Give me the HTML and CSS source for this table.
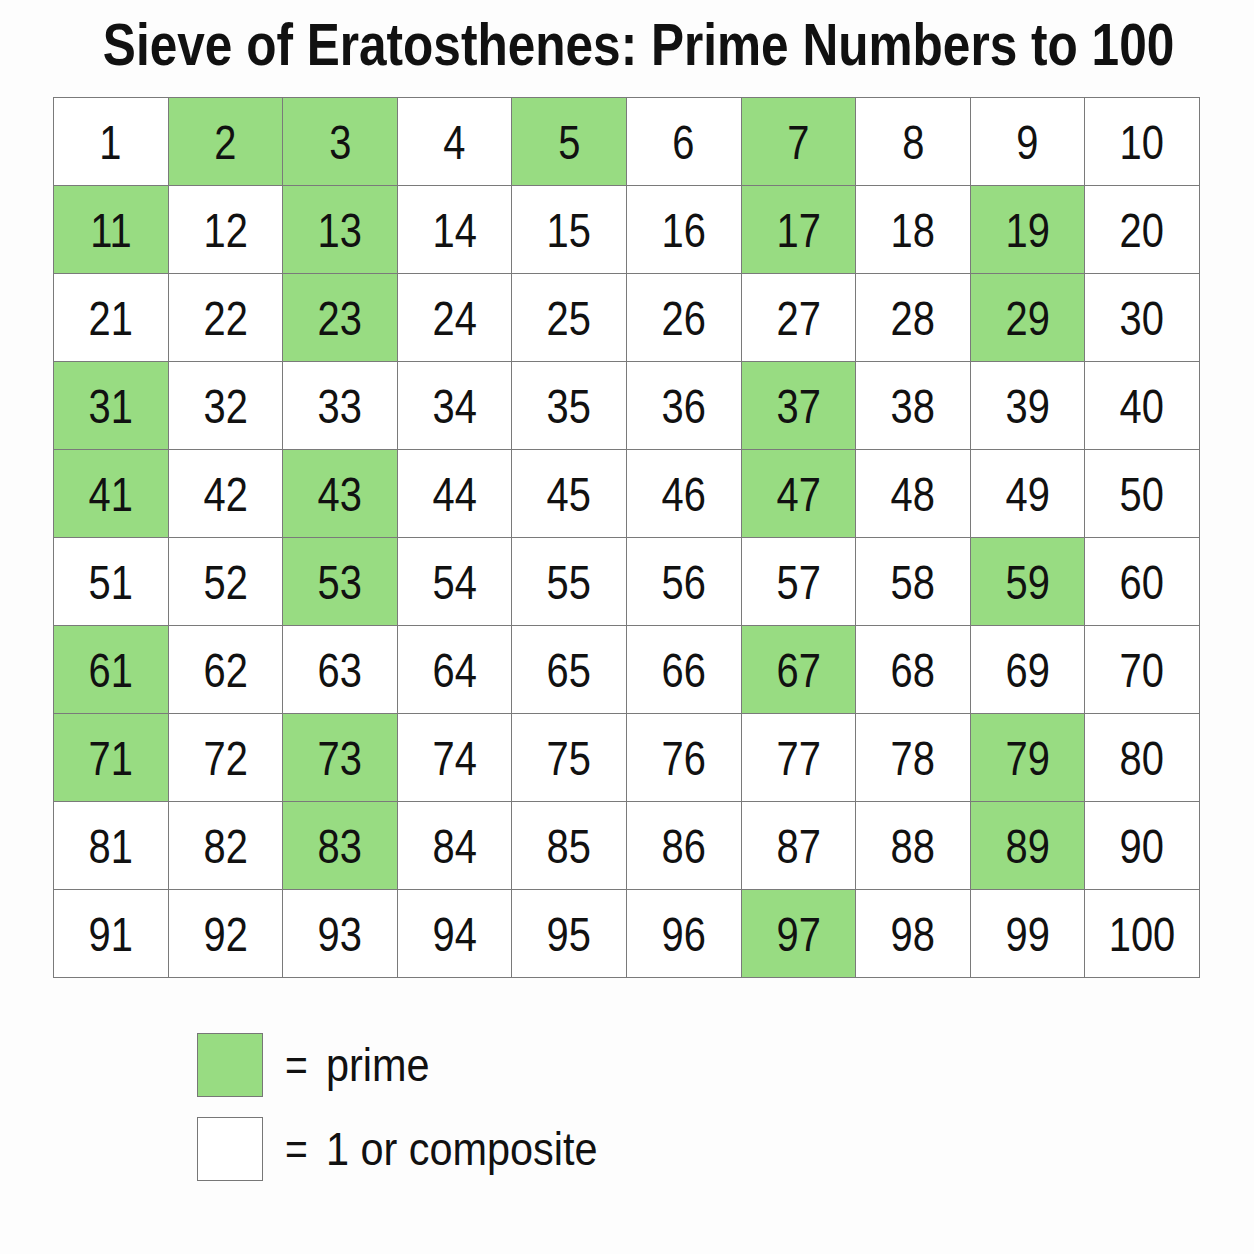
FILE: index.html
```html
<!DOCTYPE html>
<html>
<head>
<meta charset="utf-8">
<link rel="stylesheet" href="styles.css">
</head>
<body>
<div class="page">
  <h1 class="title"><span class="narrow">Sieve of Eratosthenes: Prime Numbers to 100</span></h1>
  <div class="grid" id="grid"></div>
  <div class="legend">
    <div class="legend-row"><span class="swatch prime"></span><span class="legend-text"><span class="narrow eq">=</span><span class="narrow">prime</span></span></div>
    <div class="legend-row"><span class="swatch"></span><span class="legend-text"><span class="narrow eq">=</span><span class="narrow">1 or composite</span></span></div>
  </div>
</div>
<script src="script.js"></script>
</body>
</html>
```
FILE: script.js
```js
(function () {
  var grid = document.getElementById('grid');
  function isPrime(n) {
    if (n < 2) return false;
    for (var i = 2; i * i <= n; i++) if (n % i === 0) return false;
    return true;
  }
  for (var n = 1; n <= 100; n++) {
    var c = document.createElement('div');
    c.className = 'cell' + (isPrime(n) ? ' prime' : '');
    var s = document.createElement('span');
    s.className = 'narrow';
    s.textContent = n;
    c.appendChild(s);
    grid.appendChild(c);
  }
})();
```
FILE: styles.css
```css
html, body {
  margin: 0;
  padding: 0;
  background: #fdfdfd;
}
.page {
  width: 1254px;
  height: 1254px;
  font-family: "Liberation Sans", Arial, sans-serif;
  color: #111;
  overflow: hidden;
}
.narrow {
  display: inline-block;
  white-space: nowrap;
  transform: scaleX(0.8);
}
.title {
  margin: 0;
  padding-top: 12px;
  padding-left: 24px;
  height: 97px;
  box-sizing: border-box;
  display: flex;
  justify-content: center;
  font-size: 60px;
  line-height: 66px;
  font-weight: bold;
}
.title .narrow {
  transform: scaleX(0.826);
  transform-origin: center;
}
.grid {
  margin-left: 53px;
  width: 1147px;
  display: grid;
  grid-template-columns: repeat(10, 1fr);
  grid-auto-rows: 88px;
  border-top: 1px solid #7a7a7a;
  border-left: 1px solid #7a7a7a;
  box-sizing: border-box;
}
.cell {
  border-right: 1px solid #7a7a7a;
  border-bottom: 1px solid #7a7a7a;
  display: flex;
  align-items: center;
  justify-content: center;
  font-size: 48px;
  line-height: 1;
  padding-top: 2px;
  background: #fff;
}
.cell .narrow {
  transform: scaleX(0.83);
}
.cell.prime {
  background: #98dc82;
}
.legend {
  margin-top: 55px;
  margin-left: 197px;
  display: flex;
  flex-direction: column;
  gap: 20px;
}
.legend-row {
  display: flex;
  align-items: center;
  gap: 22px;
}
.swatch {
  width: 64px;
  height: 62px;
  border: 1px solid #777;
  background: #fff;
}
.swatch.prime {
  background: #98dc82;
}
.legend-text {
  display: flex;
  align-items: center;
  font-size: 46px;
  line-height: 50px;
}
.legend-text .narrow {
  transform: scaleX(0.9);
  transform-origin: left center;
}
.legend-text .eq {
  width: 41px;
  transform: scaleX(0.85);
}
```
